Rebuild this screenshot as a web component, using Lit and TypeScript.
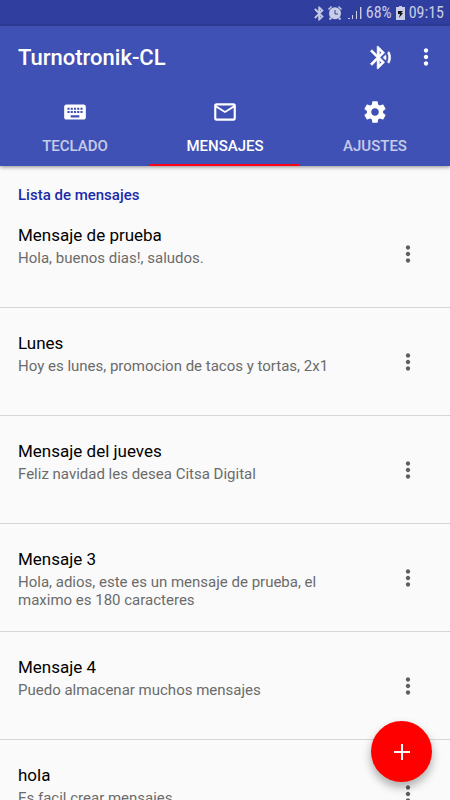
import { LitElement, html, css, svg } from "lit";
import { customElement, property, state } from "lit/decorators.js";
import { classMap } from "lit/directives/class-map.js";

interface Message {
  title: string;
  body: string;
}

const keyboardIcon = svg`<path d="M20 5H4c-1.1 0-1.99.9-1.99 2L2 17c0 1.1.9 2 2 2h16c1.1 0 2-.9 2-2V7c0-1.1-.9-2-2-2zm-9 3h2v2h-2V8zm0 3h2v2h-2v-2zM8 8h2v2H8V8zm0 3h2v2H8v-2zm-1 2H5v-2h2v2zm0-3H5V8h2v2zm9 7H8v-2h8v2zm0-4h-2v-2h2v2zm0-3h-2V8h2v2zm3 3h-2v-2h2v2zm0-3h-2V8h2v2z"/>`;
const mailIcon = svg`<path d="M20 4H4c-1.1 0-1.99.9-1.99 2L2 18c0 1.1.9 2 2 2h16c1.1 0 2-.9 2-2V6c0-1.1-.9-2-2-2zm0 14H4V8l8 5 8-5v10zm-8-7L4 6h16l-8 5z"/>`;
const gearIcon = svg`<path d="M19.43 12.98c.04-.32.07-.64.07-.98s-.03-.66-.07-.98l2.11-1.65c.19-.15.24-.42.12-.64l-2-3.46c-.12-.22-.39-.3-.61-.22l-2.49 1c-.52-.4-1.08-.73-1.69-.98l-.38-2.65C14.46 2.18 14.25 2 14 2h-4c-.25 0-.46.18-.49.42l-.38 2.65c-.61.25-1.17.59-1.69.98l-2.49-1c-.23-.09-.49 0-.61.22l-2 3.46c-.13.22-.07.49.12.64l2.11 1.65c-.04.32-.07.65-.07.98s.03.66.07.98l-2.11 1.65c-.19.15-.24.42-.12.64l2 3.46c.12.22.39.3.61.22l2.49-1c.52.4 1.08.73 1.69.98l.38 2.65c.03.24.24.42.49.42h4c.25 0 .46-.18.49-.42l.38-2.65c.61-.25 1.17-.59 1.69-.98l2.49 1c.23.09.49 0 .61-.22l2-3.46c.12-.22.07-.49-.12-.64l-2.11-1.65zM12 15.5c-1.93 0-3.5-1.57-3.5-3.5s1.57-3.5 3.5-3.5 3.5 1.57 3.5 3.5-1.57 3.5-3.5 3.5z"/>`;
const moreIcon = svg`<path d="M12 8c1.1 0 2-.9 2-2s-.9-2-2-2-2 .9-2 2 .9 2 2 2zm0 2c-1.1 0-2 .9-2 2s.9 2 2 2 2-.9 2-2-.9-2-2-2zm0 6c-1.1 0-2 .9-2 2s.9 2 2 2 2-.9 2-2-.9-2-2-2z"/>`;
const bluetoothAudioIcon = svg`<path d="M14.24 12.01l2.32 2.32c.28-.72.44-1.51.44-2.33 0-.82-.16-1.59-.43-2.31l-2.33 2.32zm5.29-5.3l-1.26 1.26c.63 1.21.98 2.57.98 4.02s-.36 2.82-.98 4.02l1.2 1.2c.97-1.54 1.54-3.36 1.54-5.31-.01-1.89-.55-3.67-1.48-5.19zm-3.82 1L10 2H9v7.59L4.41 5 3 6.41 8.59 12 3 17.59 4.41 19 9 14.41V22h1l5.71-5.71-4.3-4.29 4.3-4.29zM11 5.83l1.88 1.88L11 9.59V5.83zm1.88 10.46L11 18.17v-3.76l1.88 1.88z" stroke="currentColor" stroke-width=".5"/>`;
const bluetoothPath = "M17.71 7.71L12 2h-1v7.59L6.41 5 5 6.41 10.59 12 5 17.59 6.41 19 11 14.41V22h1l5.71-5.71-4.3-4.29 4.3-4.29zM13 5.83l1.88 1.88L13 9.59V5.83zm1.88 10.46L13 18.17v-3.76l1.88 1.88z";

@customElement("status-bar")
class StatusBar extends LitElement {
  static styles = css`
    :host {
      display: flex;
      align-items: center;
      justify-content: flex-end;
      height: 26px;
      padding-right: 6px;
      background: #303f9f;
      color: #c9cde6;
      font: 16px/26px "Roboto Condensed", Roboto, sans-serif;
      font-stretch: condensed;
    }
    svg {
      display: block;
      fill: currentColor;
    }
    .level {
      margin: 0 4px;
    }
    .clock {
      margin-left: 4px;
    }
    .bluetooth {
      margin-right: 4px;
    }
    .alarm {
      margin-right: 6px;
    }
  `;

  render() {
    return html`
      <svg class="bluetooth" width="10" height="15" viewBox="5 1 13 22"><path d=${bluetoothPath} stroke="currentColor"/></svg>
      <svg class="alarm" width="14" height="14" viewBox="0 0 14 14">
        <path d="M0 3 3 0l1 1-3 3zM14 3l-3-3-1 1 3 3z"/>
        <path d="M2 11l-1 2 1 1 2-1zM12 11l1 2-1 1-2-1z"/>
        <circle cx="7" cy="7.3" r="6"/>
        <path d="M7 4v4h3" fill="none" stroke="#303f9f" stroke-width="1"/>
      </svg>
      <svg width="14" height="14" viewBox="0 0 14 14">
        <path d="M0 12h2v1H0zM4 9h1v4H4zM8 5h1v8H8zM12 1h1.4v12H12z"/>
      </svg>
      <span class="level">68%</span>
      <svg width="9" height="14" viewBox="0 0 9 14">
        <path d="M3 0h3v1h3v13H0V1h3z"/>
        <path d="M2 5h5L5 7h2l-4 5 1-4H2z" fill="#111"/>
      </svg>
      <span class="clock">09:15</span>
    `;
  }
}

@customElement("message-row")
class MessageRow extends LitElement {
  @property() title = "";
  @property() body = "";

  static styles = css`
    :host {
      display: flex;
      box-sizing: border-box;
      min-height: 108px;
      padding: 0 18px;
      border-bottom: 1px solid #d6d6d6;
    }
    .text {
      flex: 1;
      min-width: 0;
      padding: 24px 24px 16px 0;
    }
    .title {
      margin: 0 0 3px;
      color: #000;
      font-size: 17px;
      font-weight: 400;
      line-height: 22px;
    }
    .body {
      margin: 0;
      color: #6b6b6b;
      font-size: 15px;
      line-height: 18px;
    }
    .more {
      align-self: center;
      display: grid;
      place-items: center;
      width: 48px;
      height: 48px;
      padding: 0;
      border: 0;
      background: none;
      color: #5f5f5f;
    }
    svg {
      fill: currentColor;
    }
  `;

  render() {
    return html`
      <div class="text">
        <h3 class="title">${this.title}</h3>
        <p class="body">${this.body}</p>
      </div>
      <button class="more" aria-label="Opciones">
        <svg width="26" height="26" viewBox="0 0 24 24">${moreIcon}</svg>
      </button>
    `;
  }
}

@customElement("app-root")
class AppRoot extends LitElement {
  @state() selected = 1;

  private tabs = [
    { label: "TECLADO", icon: keyboardIcon },
    { label: "MENSAJES", icon: mailIcon },
    { label: "AJUSTES", icon: gearIcon },
  ];

  private messages: Message[] = [
    { title: "Mensaje de prueba", body: "Hola, buenos dias!, saludos." },
    { title: "Lunes", body: "Hoy es lunes, promocion de tacos y tortas, 2x1" },
    { title: "Mensaje del jueves", body: "Feliz navidad les desea Citsa Digital" },
    { title: "Mensaje 3", body: "Hola, adios, este es un mensaje de prueba, el maximo es 180 caracteres" },
    { title: "Mensaje 4", body: "Puedo almacenar muchos mensajes" },
    { title: "hola", body: "Es facil crear mensajes" },
  ];

  static styles = css`
    :host {
      display: flex;
      flex-direction: column;
      height: 100vh;
      overflow: hidden;
      background: #fafafa;
      font-family: Roboto, sans-serif;
    }
    button {
      padding: 0;
      border: 0;
      background: none;
      color: inherit;
      font-family: inherit;
    }
    svg {
      display: block;
      fill: currentColor;
    }
    .header {
      z-index: 1;
      background: #3f51b5;
      color: #fff;
      box-shadow: 0 1px 4px rgba(0, 0, 0, 0.45);
    }
    .bar {
      display: flex;
      align-items: center;
      height: 62px;
      padding: 0 1px 0 18px;
    }
    .name {
      flex: 1;
      margin: 0;
      padding-top: 2px;
      font-size: 22px;
      font-weight: 500;
      line-height: 28px;
    }
    .action {
      display: grid;
      place-items: center;
      width: 46px;
      height: 48px;
    }
    .tabs {
      display: grid;
      grid-template-columns: repeat(3, 1fr);
    }
    .tab {
      display: flex;
      flex-direction: column;
      align-items: center;
      gap: 11px;
      height: 78px;
      padding-top: 11px;
      box-sizing: border-box;
      border-bottom: 2px solid transparent;
      font-size: 15px;
      font-weight: 500;
      line-height: 20px;
    }
    .label {
      opacity: 0.7;
    }
    .active {
      border-bottom-color: #ff0016;
    }
    .active .label {
      opacity: 1;
    }
    .list {
      flex: 1;
      min-height: 0;
      overflow: hidden;
    }
    .heading {
      margin: 0 0 -4px;
      padding: 20px 18px 0;
      color: #1a2ba8;
      font-size: 15px;
      font-weight: 500;
      line-height: 18px;
    }
    .add {
      position: fixed;
      right: 18px;
      bottom: 18px;
      display: grid;
      place-items: center;
      width: 61px;
      height: 61px;
      border-radius: 50%;
      background: #ff0000;
      color: #fff;
      box-shadow: 0 5px 10px rgba(0, 0, 0, 0.32);
    }
  `;

  render() {
    return html`
      <status-bar></status-bar>
      <header class="header">
        <div class="bar">
          <h1 class="name">Turnotronik-CL</h1>
          <button class="action" aria-label="Bluetooth">
            <svg width="27" height="27" viewBox="0 0 24 24">${bluetoothAudioIcon}</svg>
          </button>
          <button class="action" aria-label="Más opciones">
            <svg width="26" height="26" viewBox="0 0 24 24">${moreIcon}</svg>
          </button>
        </div>
        <nav class="tabs" role="tablist">
          ${this.tabs.map(
            (tab, i) => html`
              <button
                role="tab"
                aria-selected=${i === this.selected ? "true" : "false"}
                class=${classMap({ tab: true, active: i === this.selected })}
                @click=${() => (this.selected = i)}
              >
                <svg width="26" height="26" viewBox="0 0 24 24">${tab.icon}</svg>
                <span class="label">${tab.label}</span>
              </button>
            `
          )}
        </nav>
      </header>
      <main class="list">
        <h2 class="heading">Lista de mensajes</h2>
        ${this.messages.map((m) => html`<message-row .title=${m.title} .body=${m.body}></message-row>`)}
      </main>
      <button class="add" aria-label="Nuevo mensaje">
        <svg width="16" height="16" viewBox="0 0 16 16"><path d="M7 0h2v7h7v2H9v7H7V9H0V7h7z"/></svg>
      </button>
    `;
  }
}
